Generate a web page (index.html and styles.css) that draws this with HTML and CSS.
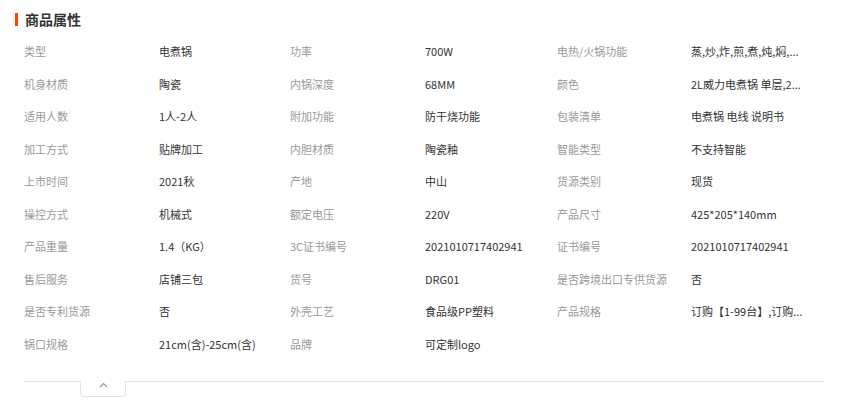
FILE: index.html
```html
<!DOCTYPE html>
<html>
<head>
  <title>商品属性</title>
  <link rel="stylesheet" href="styles.css">
</head>
<body>
  <div id="attrBox">
    <div class="attr-title">商品属性</div>

    <div class="attr-grid">
      <div class="attr-name">类型</div><div class="attr-value">电煮锅</div>
      <div class="attr-name">功率</div><div class="attr-value">700W</div>
      <div class="attr-name">电热/火锅功能</div><div class="attr-value">蒸,炒,炸,煎,煮,炖,焖,...</div>

      <div class="attr-name">机身材质</div><div class="attr-value">陶瓷</div>
      <div class="attr-name">内锅深度</div><div class="attr-value">68MM</div>
      <div class="attr-name">颜色</div><div class="attr-value">2L威力电煮锅 单层,2...</div>

      <div class="attr-name">适用人数</div><div class="attr-value">1人-2人</div>
      <div class="attr-name">附加功能</div><div class="attr-value">防干烧功能</div>
      <div class="attr-name">包装清单</div><div class="attr-value">电煮锅 电线 说明书</div>

      <div class="attr-name">加工方式</div><div class="attr-value">贴牌加工</div>
      <div class="attr-name">内胆材质</div><div class="attr-value">陶瓷釉</div>
      <div class="attr-name">智能类型</div><div class="attr-value">不支持智能</div>

      <div class="attr-name">上市时间</div><div class="attr-value">2021秋</div>
      <div class="attr-name">产地</div><div class="attr-value">中山</div>
      <div class="attr-name">货源类别</div><div class="attr-value">现货</div>

      <div class="attr-name">操控方式</div><div class="attr-value">机械式</div>
      <div class="attr-name">额定电压</div><div class="attr-value">220V</div>
      <div class="attr-name">产品尺寸</div><div class="attr-value">425*205*140mm</div>

      <div class="attr-name">产品重量</div><div class="attr-value">1.4（KG）</div>
      <div class="attr-name">3C证书编号</div><div class="attr-value">2021010717402941</div>
      <div class="attr-name">证书编号</div><div class="attr-value">2021010717402941</div>

      <div class="attr-name">售后服务</div><div class="attr-value">店铺三包</div>
      <div class="attr-name">货号</div><div class="attr-value">DRG01</div>
      <div class="attr-name">是否跨境出口专供货源</div><div class="attr-value">否</div>

      <div class="attr-name">是否专利货源</div><div class="attr-value">否</div>
      <div class="attr-name">外壳工艺</div><div class="attr-value">食品级PP塑料</div>
      <div class="attr-name">产品规格</div><div class="attr-value">订购【1-99台】,订购...</div>

      <div class="attr-name">锅口规格</div><div class="attr-value">21cm(含)-25cm(含)</div>
      <div class="attr-name">品牌</div><div class="attr-value">可定制logo</div>
    </div>

    <div class="attr-footer">
      <div class="fold-tab">
        <svg width="9" height="6" viewBox="0 0 9 6">
          <path d="M1 5 L4.5 1.5 L8 5" fill="none" stroke="#999" stroke-width="1.2"/>
        </svg>
      </div>
    </div>
  </div>
</body>
</html>
```

FILE: styles.css
```css
body {
  margin: 0;
  background: #fff;
  font-family: "Noto Sans CJK SC", "Noto Sans", sans-serif;
  font-size: 11px;
  color: #333;
}

#attrBox {
  width: 800px;
  padding: 9px 0 0 24px;
}

.attr-title {
  position: relative;
  height: 20px;
  line-height: 20px;
  font-size: 14px;
  font-weight: bold;
  color: #333;
  padding-left: 1px;
}

.attr-title::before {
  content: "";
  position: absolute;
  left: -9px;
  top: 4px;
  width: 3px;
  height: 13px;
  background: #ff4400;
}

.attr-grid {
  margin-top: 6px;
  display: grid;
  grid-template-columns: 135px 131px 135px 132px 134px 133px;
  grid-auto-rows: 32.55px;
  line-height: 32.55px;
}

.attr-name,
.attr-value {
  white-space: nowrap;
}

.attr-name {
  color: #999;
}

.attr-value {
  color: #333;
}

.attr-footer {
  margin-top: 21px;
  border-top: 1px solid #e5e5e5;
  height: 22px;
}

.fold-tab {
  margin: -1px 0 0 56px;
  width: 44px;
  height: 14px;
  border: 1px solid #e5e5e5;
  border-top: none;
  border-radius: 0 0 4px 4px;
  background: #fff;
  display: flex;
  justify-content: center;
  padding-top: 1px;
}
```
